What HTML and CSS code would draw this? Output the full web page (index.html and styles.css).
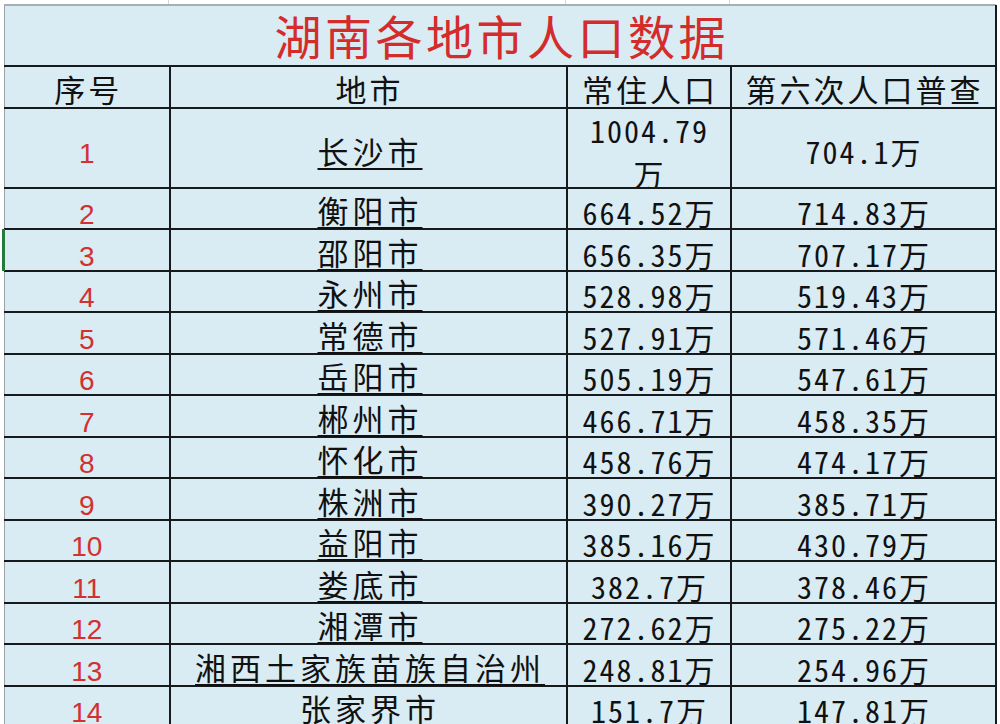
FILE: index.html
```html
<!DOCTYPE html>
<html lang="zh-CN">
<head>
<meta charset="utf-8">
<title>湖南各地市人口数据</title>
<link rel="stylesheet" href="styles.css">
</head>
<body>
<div class="sheet">
  <div class="strip">
    <span class="tick t1"></span>
    <span class="tick t2"></span>
    <span class="tick t3"></span>
  </div>
  <table class="data">
    <colgroup>
      <col class="c-no"><col class="c-city"><col class="c-res"><col class="c-six">
    </colgroup>
    <tr class="r-title"><td colspan="4" class="title">湖南各地市人口数据</td></tr>
    <tr class="r-head">
      <td class="hd">序号</td><td class="hd">地市</td><td class="hd">常住人口</td><td class="hd">第六次人口普查</td>
    </tr>
    <tr class="r-first">
      <td class="no">1</td><td class="city"><span>长沙市</span></td>
      <td class="val wrap"><div class="clip">1004.79<br>万</div></td><td class="val">704.1万</td>
    </tr>
    <tr class="r"><td class="no">2</td><td class="city"><span>衡阳市</span></td><td class="val">664.52万</td><td class="val">714.83万</td></tr>
    <tr class="r"><td class="no sel">3</td><td class="city"><span>邵阳市</span></td><td class="val">656.35万</td><td class="val">707.17万</td></tr>
    <tr class="r"><td class="no">4</td><td class="city"><span>永州市</span></td><td class="val">528.98万</td><td class="val">519.43万</td></tr>
    <tr class="r"><td class="no">5</td><td class="city"><span>常德市</span></td><td class="val">527.91万</td><td class="val">571.46万</td></tr>
    <tr class="r"><td class="no">6</td><td class="city"><span>岳阳市</span></td><td class="val">505.19万</td><td class="val">547.61万</td></tr>
    <tr class="r"><td class="no">7</td><td class="city"><span>郴州市</span></td><td class="val">466.71万</td><td class="val">458.35万</td></tr>
    <tr class="r"><td class="no">8</td><td class="city"><span>怀化市</span></td><td class="val">458.76万</td><td class="val">474.17万</td></tr>
    <tr class="r"><td class="no">9</td><td class="city"><span>株洲市</span></td><td class="val">390.27万</td><td class="val">385.71万</td></tr>
    <tr class="r"><td class="no">10</td><td class="city"><span>益阳市</span></td><td class="val">385.16万</td><td class="val">430.79万</td></tr>
    <tr class="r"><td class="no">11</td><td class="city"><span>娄底市</span></td><td class="val">382.7万</td><td class="val">378.46万</td></tr>
    <tr class="r"><td class="no">12</td><td class="city"><span>湘潭市</span></td><td class="val">272.62万</td><td class="val">275.22万</td></tr>
    <tr class="r"><td class="no">13</td><td class="city"><span>湘西土家族苗族自治州</span></td><td class="val">248.81万</td><td class="val">254.96万</td></tr>
    <tr class="r"><td class="no">14</td><td class="city"><span>张家界市</span></td><td class="val">151.7万</td><td class="val">147.81万</td></tr>
  </table>
</div>
</body>
</html>
```

FILE: styles.css
```css
html, body {
  margin: 0;
  padding: 0;
  background: #ffffff;
}

body {
  width: 1000px;
  height: 724px;
  overflow: hidden;
  font-family: "Noto Sans CJK SC", "Noto Sans", sans-serif;
  color: #111;
}

.sheet {
  position: relative;
  width: 1000px;
}

.strip {
  position: relative;
  height: 5px;
  border-bottom: 1px solid #a9b0b3;
  box-sizing: border-box;
  margin-left: 4px;
  margin-right: 4px;
}

.tick {
  position: absolute;
  top: 0;
  width: 1px;
  height: 4px;
  background: #d6d6d6;
}
.t1 { left: 164px; }
.t2 { left: 561px; }
.t3 { left: 725px; }

.data {
  margin-left: 4px;
  width: 991px;
  table-layout: fixed;
  border-collapse: collapse;
  background: #d9ebf3;
}

.c-no { width: 165px; }
.c-city { width: 397px; }
.c-res { width: 164px; }
.c-six { width: 265px; }

.data td {
  padding: 0;
  border: 2px solid #161a1c;
  text-align: center;
  vertical-align: bottom;
  white-space: nowrap;
  overflow: visible;
}

.data tr td:first-child {
  border-left: 1px solid #9aa4a8;
}

.r-title { height: 60px; }
.r-head { height: 42px; }
.r-first { height: 80px; }
.r { height: 41.5px; }

.data td.title {
  border-top: 1px solid #a9b0b3;
  font-size: 47px;
  line-height: 56px;
  padding-bottom: 2px;
  padding-left: 4px;
  letter-spacing: 3.5px;
  color: #d42b2b;
  font-weight: 400;
}

.data td.hd {
  font-size: 31px;
  line-height: 36px;
  letter-spacing: 3px;
  padding-left: 3px;
}

.data td.no {
  font-family: "Liberation Sans", Arial, sans-serif;
  font-size: 28px;
  line-height: 26px;
  color: #d33030;
}

.data td.sel {
  position: relative;
}
.data td.sel::before {
  content: "";
  position: absolute;
  left: -3px;
  top: -1px;
  bottom: -1px;
  width: 3px;
  background: #267a3e;
}

.data td.city {
  font-size: 31px;
  line-height: 32px;
  letter-spacing: 4px;
  padding-bottom: 2px;
  padding-left: 4px;
}

.data td.city span {
  text-decoration: underline;
  text-decoration-thickness: 2px;
  text-underline-offset: 4px;
}

.data td.val {
  font-size: 30px;
  line-height: 32px;
  letter-spacing: 2px;
  padding-left: 2px;
  font-feature-settings: "hwid" 1;
}

.r-first td.no,
.r-first td.city,
.r-first td.val {
  padding-bottom: 20px;
}

.r-first td.wrap {
  vertical-align: top;
  padding-bottom: 0;
}

.clip {
  height: 78px;
  overflow: hidden;
  line-height: 43px;
}
```
